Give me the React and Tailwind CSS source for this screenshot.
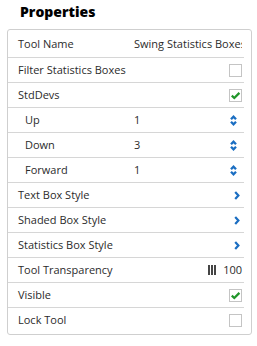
const rows = [
  { label: "Tool Name", value: "Swing Statistics Boxes" },
  { label: "Filter Statistics Boxes", control: "checkbox", checked: false },
  { label: "StdDevs", control: "checkbox", checked: true },
  { label: "Up", value: "1", control: "spinner", indent: true },
  { label: "Down", value: "3", control: "spinner", indent: true },
  { label: "Forward", value: "1", control: "spinner", indent: true },
  { label: "Text Box Style", control: "chevron" },
  { label: "Shaded Box Style", control: "chevron" },
  { label: "Statistics Box Style", control: "chevron" },
  { label: "Tool Transparency", control: "slider", value: "100" },
  { label: "Visible", control: "checkbox", checked: true },
  { label: "Lock Tool", control: "checkbox", checked: false },
];

function Checkbox({ checked }) {
  return (
    <span className="flex h-[13px] w-[13px] items-center justify-center border border-[#c4c4c4] bg-white">
      {checked && (
        <svg width="11" height="11" viewBox="0 0 11 11">
          <path d="M1.8 5.6 L4.3 8 L9.4 2.9" fill="none" stroke="#21962b" strokeWidth="2.3" />
        </svg>
      )}
    </span>
  );
}

function Spinner() {
  return (
    <svg width="7" height="13" viewBox="0 0 7 13" className="ml-[1px]">
      <path d="M1 5.2 L3.5 2.6 L6 5.2" fill="none" stroke="#1b6ec2" strokeWidth="2.3" />
      <path d="M1 7.8 L3.5 10.4 L6 7.8" fill="none" stroke="#1b6ec2" strokeWidth="2.3" />
    </svg>
  );
}

function Chevron() {
  return (
    <svg width="6" height="9" viewBox="0 0 6 9" className="ml-auto mr-[2px]">
      <path d="M1.2 1 L4.4 4.5 L1.2 8" fill="none" stroke="#1b6ec2" strokeWidth="2.2" />
    </svg>
  );
}

function Row({ row, first }) {
  return (
    <div
      className={`flex h-[25px] items-center pr-[2px] text-[11px] text-[#2b2b2b] ${
        first ? "" : "border-t border-[#d6d6d6]"
      }`}
    >
      <div className={`w-[126px] shrink-0 whitespace-nowrap ${row.indent ? "pl-[17px]" : "pl-[10px]"}`}>
        {row.label}
      </div>
      <div className="min-w-0 flex-1 overflow-hidden whitespace-nowrap">
        {row.control !== "slider" && row.value}
      </div>
      {row.control === "checkbox" && <Checkbox checked={row.checked} />}
      {row.control === "spinner" && (
        <span className="flex w-[13px] items-center">
          <Spinner />
        </span>
      )}
      {row.control === "chevron" && (
        <span className="flex w-[13px] items-center">
          <Chevron />
        </span>
      )}
      {row.control === "slider" && (
        <span className="flex items-center">
          <span className="flex h-[10px] gap-[1px]">
            <span className="w-[2px] bg-[#454545]" />
            <span className="w-[2px] bg-[#454545]" />
            <span className="w-[2px] bg-[#454545]" />
          </span>
          <span className="ml-[7px]">{row.value}</span>
        </span>
      )}
    </div>
  );
}

export default function App() {
  return (
    <div className="h-[346px] w-[257px] bg-white font-['Open_Sans',sans-serif]">
      <h1 className="pl-5 pt-[2px] text-[14px] font-extrabold leading-[19px] text-black">Properties</h1>
      <div className="ml-[7px] mt-[8px] w-[245px] rounded-[3px] border border-[#cfcfcf] py-[2px]">
        <div className="mr-[7px]">
          {rows.map((row, i) => (
            <Row key={row.label} row={row} first={i === 0} />
          ))}
        </div>
      </div>
    </div>
  );
}
